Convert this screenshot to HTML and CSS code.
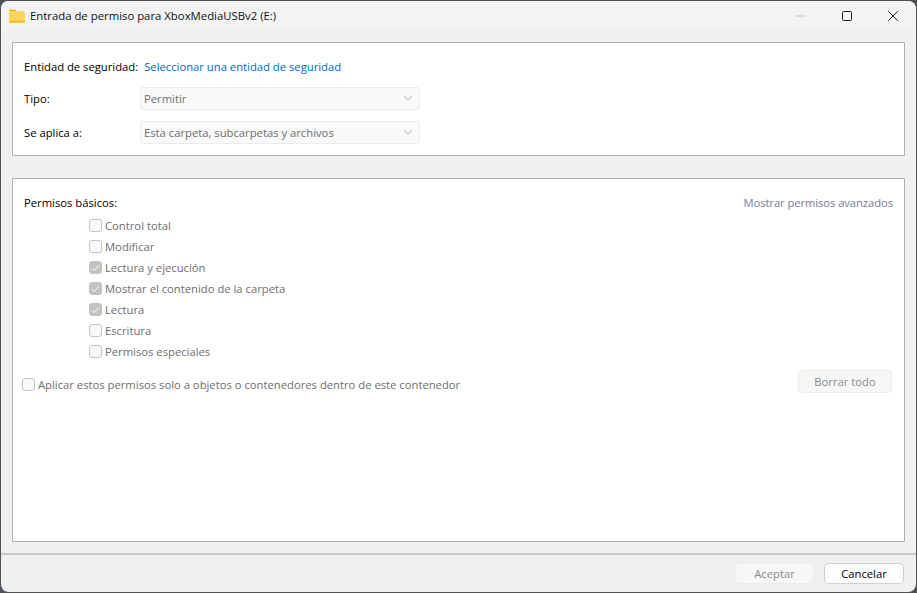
FILE: index.html
```html
<!DOCTYPE html>
<html lang="es">
<head>
<meta charset="utf-8">
<title>Entrada de permiso para XboxMediaUSBv2 (E:)</title>
<link rel="stylesheet" href="styles.css">
</head>
<body>
<div class="window">
  <header class="titlebar">
    <svg class="folder" width="16" height="14" viewBox="0 0 16 14"><path d="M0 2.2C0 1.2.7.5 1.7.5h3.6c.5 0 .9.2 1.2.5L8 2.3H0z" fill="#f5b400"/><path d="M0 3.2c0-.6.5-1 1-1h13.4c.9 0 1.6.7 1.6 1.6v8.2c0 .9-.7 1.5-1.6 1.5H1.6C.7 13.5 0 12.9 0 12z" fill="#ffd45c"/><path d="M0 12v.2c0 .7.7 1.3 1.6 1.3h12.8c.9 0 1.6-.6 1.6-1.3V12z" fill="#f5b400"/></svg>
    <span class="title">Entrada de permiso para XboxMediaUSBv2 (E:)</span>
    <div class="controls">
      <span class="ctl"><svg width="10" height="10" viewBox="0 0 10 10"><path d="M0 5h10" stroke="#c4c4c4" fill="none"/></svg></span>
      <span class="ctl"><svg width="10" height="10" viewBox="0 0 10 10"><rect x=".5" y=".5" width="9" height="9" rx="1" stroke="#1a1a1a" fill="none"/></svg></span>
      <span class="ctl"><svg width="10" height="10" viewBox="0 0 10 10"><path d="M.3.3l9.4 9.4M9.7.3L.3 9.7" stroke="#1a1a1a" fill="none"/></svg></span>
    </div>
  </header>

  <main class="content">
    <section class="panel top">
      <div class="row entity">
        <span class="label">Entidad de seguridad:</span>
        <a class="link">Seleccionar una entidad de seguridad</a>
      </div>
      <div class="row">
        <span class="label fixed">Tipo:</span>
        <div class="select">Permitir<svg class="chev" width="8" height="5" viewBox="0 0 8 5"><path d="M.4.4L4 4l3.6-3.6" stroke="#a8a8a8" fill="none"/></svg></div>
      </div>
      <div class="row">
        <span class="label fixed">Se aplica a:</span>
        <div class="select">Esta carpeta, subcarpetas y archivos<svg class="chev" width="8" height="5" viewBox="0 0 8 5"><path d="M.4.4L4 4l3.6-3.6" stroke="#a8a8a8" fill="none"/></svg></div>
      </div>
    </section>

    <section class="panel bottom">
      <div class="perm-head">
        <span class="label">Permisos básicos:</span>
        <span class="advanced">Mostrar permisos avanzados</span>
      </div>
      <ul class="checks">
        <li class="check"><span class="box"></span>Control total</li>
        <li class="check"><span class="box"></span>Modificar</li>
        <li class="check"><span class="box on"><svg width="9" height="8" viewBox="0 0 9 8"><path d="M1 4.2l2.3 2.3L8 1.5" stroke="#fff" fill="none"/></svg></span>Lectura y ejecución</li>
        <li class="check"><span class="box on"><svg width="9" height="8" viewBox="0 0 9 8"><path d="M1 4.2l2.3 2.3L8 1.5" stroke="#fff" fill="none"/></svg></span>Mostrar el contenido de la carpeta</li>
        <li class="check"><span class="box on"><svg width="9" height="8" viewBox="0 0 9 8"><path d="M1 4.2l2.3 2.3L8 1.5" stroke="#fff" fill="none"/></svg></span>Lectura</li>
        <li class="check"><span class="box"></span>Escritura</li>
        <li class="check"><span class="box"></span>Permisos especiales</li>
      </ul>
      <div class="apply-row">
        <span class="check wide"><span class="box"></span>Aplicar estos permisos solo a objetos o contenedores dentro de este contenedor</span>
        <button class="btn clear" disabled>Borrar todo</button>
      </div>
    </section>
  </main>

  <footer class="footer">
    <button class="btn accept" disabled>Aceptar</button>
    <button class="btn cancel">Cancelar</button>
  </footer>
</div>
</body>
</html>
```

FILE: styles.css
```css
* { box-sizing: border-box; }
html, body { margin: 0; height: 100%; background: #4b5257; overflow: hidden; }
body { font-family: "Open Sans", "Noto Sans", sans-serif; font-size: 11.25px; color: #000; }
.window { width: 916px; height: 591px; margin-top: 1px; background: #f0f0f0; border-radius: 8px; border-left: 1px solid #4b5257; display: flex; flex-direction: column; overflow: hidden; }
.titlebar { height: 29px; background: #f3f3f3; display: flex; align-items: center; padding-left: 8px; flex: none; }
.folder { flex: none; margin-right: 5px; }
.title { font-size: 11.35px; color: #111; }
.controls { margin-left: auto; display: flex; }
.ctl { width: 46px; height: 29px; display: flex; align-items: center; justify-content: center; }
.content { flex: 1; padding: 12px 11px 11px 11px; display: flex; flex-direction: column; gap: 22px; border-bottom: 2px solid #c9c9c9; }
.panel { background: #fff; border: 1px solid #b2b2b2; }
.top { height: 114px; padding: 0 11px; display: flex; flex-direction: column; }
.row { display: flex; align-items: center; height: 34px; }
.entity { height: 22px; margin-top: 12px; gap: 6px; }
.row.entity + .row { margin-top: 4px; }
.label { color: #000; white-space: nowrap; }
.fixed { width: 116px; }
.link { color: #0067d0; }
.select { width: 280px; height: 23px; background: #f9f9f9; border: 1px solid #ececec; border-radius: 3px; color: #6e6e6e; padding: 0 3px; display: flex; align-items: center; justify-content: space-between; }
.chev { margin-right: 4px; }
.bottom { flex: 1; padding: 14px 11px 0 11px; }
.perm-head { display: flex; justify-content: space-between; height: 18px; align-items: center; }
.advanced { color: #7a7a96; letter-spacing: -0.08px; }
.checks { list-style: none; margin: 4px 0 0; padding: 0 0 0 65px; }
.check { display: flex; align-items: center; height: 21px; color: #6e6e6e; gap: 3px; white-space: nowrap; }
.box { width: 13px; height: 13px; border: 1px solid #c4c4c4; border-radius: 3px; background: #f9f9f9; flex: none; display: flex; align-items: center; justify-content: center; }
.box.on { background: #c2c2c2; border-color: #c2c2c2; }
.apply-row { display: flex; align-items: center; justify-content: space-between; margin-top: 6px; margin-left: -2px; }
.apply-row .wide { margin-top: 6px; }
.btn { font: inherit; height: 23px; border-radius: 4px; border: 1px solid #d0d0d0; background: #fdfdfd; color: #000; padding: 0; }
.btn:disabled { background: #f7f7f7; border-color: #ececec; color: #8a8a8a; }
.clear { width: 94px; margin-right: 1px; }
.footer { height: 37px; flex: none; display: flex; justify-content: flex-end; align-items: center; gap: 10px; padding: 0 12px 0 0; }
.accept { width: 79px; height: 21px; }
.cancel { width: 80px; height: 21px; }
```
